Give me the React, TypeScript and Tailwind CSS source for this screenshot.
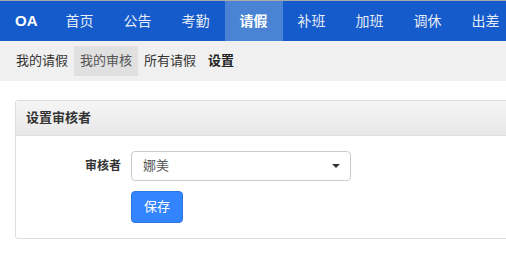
const navItems = ["首页", "公告", "考勤", "请假", "补班", "加班", "调休", "出差"];
const subItems = ["我的请假", "我的审核", "所有请假"];

export default function App() {
  return (
    <div
      className="w-[506px] h-[269px] overflow-hidden bg-white text-[#333]"
      style={{ fontFamily: '"Liberation Sans", "Noto Sans CJK SC", sans-serif' }}
    >
      <div className="border-t border-[#aaaaaa] bg-[#155bcb] h-[41px] flex items-stretch whitespace-nowrap w-[700px]">
        <div className="flex items-center pl-[15px] pr-[13px] text-[15px] font-bold text-white">OA</div>
        {navItems.map((item) => (
          <div
            key={item}
            className={
              item === "请假"
                ? "flex items-center px-[15px] text-[14px] font-bold text-white bg-[#4a83d4]"
                : "flex items-center px-[15px] text-[14px] text-[#e6ecf8]"
            }
          >
            {item}
          </div>
        ))}
      </div>

      <div className="bg-[#f0f0f0] h-[40px] flex items-center px-[10px] text-[13px]">
        {subItems.map((item) => (
          <div
            key={item}
            className={
              item === "我的审核"
                ? "h-[30px] flex items-center px-[6px] bg-[#e0e0e0] text-[#555]"
                : "h-[30px] flex items-center px-[6px] text-[#333]"
            }
          >
            {item}
          </div>
        ))}
        <div className="h-[30px] flex items-center px-[6px] font-bold text-[#222]">设置</div>
      </div>

      <div className="pl-[15px] pt-[19px]">
        <div className="w-[600px] border border-[#dddddd] rounded-[3px]">
          <div className="h-[35px] flex items-center px-[10px] border-b border-[#dddddd] bg-gradient-to-b from-[#f5f5f5] to-[#e8e8e8] text-[13px] font-bold text-[#333]">
            设置审核者
          </div>
          <div className="pt-[15px] pb-[15px]">
            <div className="flex items-center">
              <div className="w-[105px] text-right text-[12px] font-bold text-[#333]">审核者</div>
              <div className="ml-[10px] w-[220px] h-[30px] border border-[#cccccc] rounded-[4px] flex items-center justify-between pl-[11px] pr-[10px] text-[13px] text-[#555]">
                <span>娜美</span>
                <span className="w-0 h-0 border-l-[4px] border-r-[4px] border-t-[4px] border-l-transparent border-r-transparent border-t-[#333]" />
              </div>
            </div>
            <div className="mt-[10px] ml-[115px]">
              <div className="w-[52px] h-[32px] rounded-[4px] bg-[#3385ff] border border-[#2a75e6] flex items-center justify-center text-[13px] text-white">
                保存
              </div>
            </div>
          </div>
        </div>
      </div>
    </div>
  );
}
